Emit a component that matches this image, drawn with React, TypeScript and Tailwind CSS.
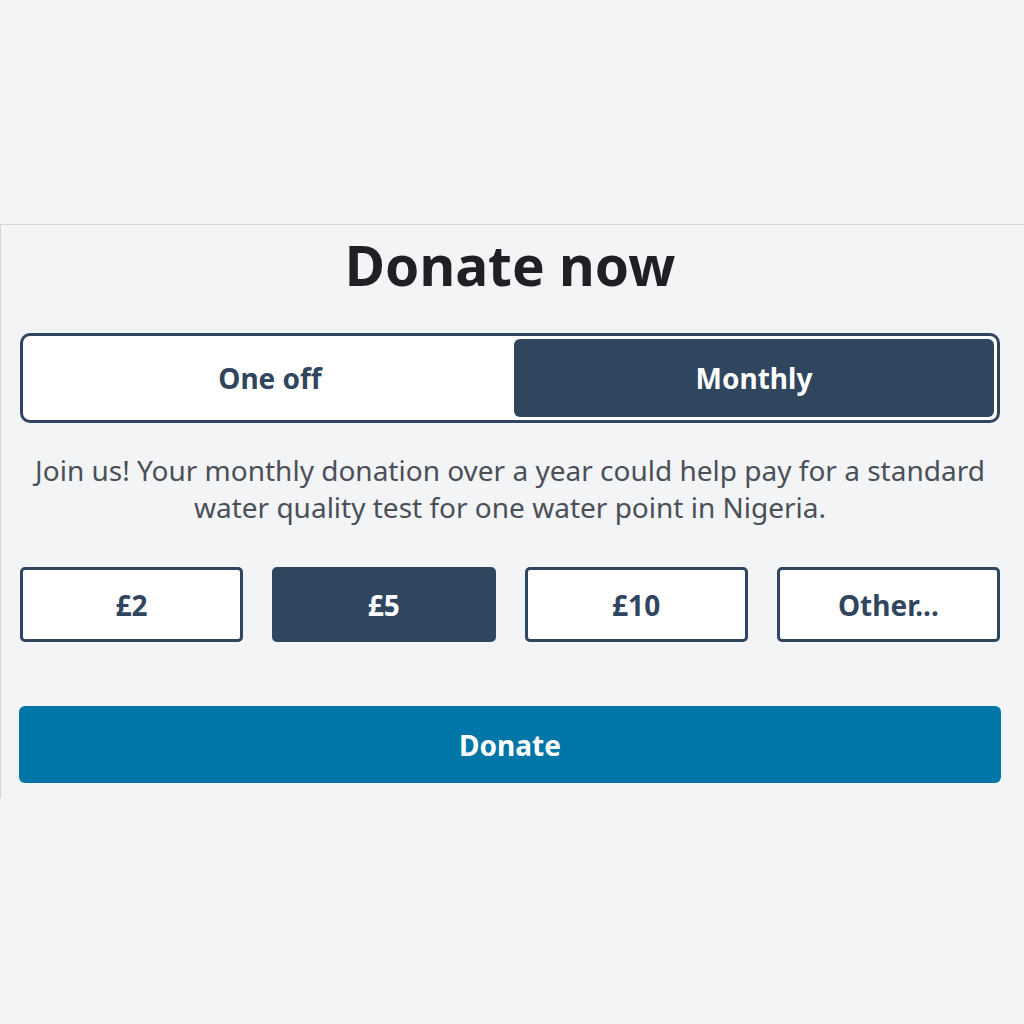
import React, { useState } from "react";

export default function App() {
  const [freq, setFreq] = useState<"one" | "monthly">("monthly");
  const [amount, setAmount] = useState("£5");
  const amounts = ["£2", "£5", "£10", "Other..."];
  return (
    <div
      className="w-[1024px] h-[1024px] bg-[#f3f4f6] flex flex-col"
      style={{ fontFamily: '"Noto Sans", "Open Sans", sans-serif' }}
    >
      <div className="h-[224px] shrink-0" />
      <div className="h-[574px] border-t border-l border-[#d4d6da] flex flex-col pl-[18px] pr-[23px]">
        <h1 className="text-[55px] leading-[64px] font-bold text-[#1f2023] text-center mt-[8px]">
          Donate now
        </h1>
        <div className="mt-[36px] h-[90px] rounded-[10px] border-[3px] border-[#2f4560] bg-white flex p-[3px] mx-[1px]">
          <button
            onClick={() => setFreq("one")}
            className={`w-[488px] shrink-0 rounded-[6px] text-[28px] font-bold ${
              freq === "one" ? "bg-[#30455e] text-white" : "text-[#30455e]"
            }`}
          >
            One off
          </button>
          <button
            onClick={() => setFreq("monthly")}
            className={`flex-1 rounded-[6px] text-[28px] font-bold ${
              freq === "monthly" ? "bg-[#30455e] text-white" : "text-[#30455e]"
            }`}
          >
            Monthly
          </button>
        </div>
        <p className="mt-[29px] text-[28px] leading-[37px] text-[#4b4f57] text-center">
          Join us! Your monthly donation over a year could help pay for a standard water quality test for one water point in Nigeria.
        </p>
        <div className="mt-[41px] grid grid-cols-4 gap-[29px] px-[1px]">
          {amounts.map((a) => (
            <button
              key={a}
              onClick={() => setAmount(a)}
              className={`h-[75px] rounded-[5px] text-[28px] font-bold border-[3px] ${
                amount === a
                  ? "bg-[#30455e] border-[#30455e] text-white"
                  : "bg-white border-[#2f4560] text-[#30455e]"
              }`}
            >
              {a}
            </button>
          ))}
        </div>
        <button className="mt-[64px] h-[77px] rounded-[6px] bg-[#0076a8] text-white text-[28px] font-bold">
          Donate
        </button>
      </div>
    </div>
  );
}
